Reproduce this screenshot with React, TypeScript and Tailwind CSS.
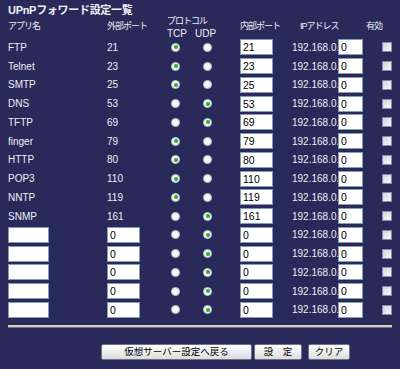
const forwards = [
  { app: "FTP", ext: "21", proto: "tcp", port: "21" },
  { app: "Telnet", ext: "23", proto: "tcp", port: "23" },
  { app: "SMTP", ext: "25", proto: "tcp", port: "25" },
  { app: "DNS", ext: "53", proto: "udp", port: "53" },
  { app: "TFTP", ext: "69", proto: "udp", port: "69" },
  { app: "finger", ext: "79", proto: "tcp", port: "79" },
  { app: "HTTP", ext: "80", proto: "tcp", port: "80" },
  { app: "POP3", ext: "110", proto: "tcp", port: "110" },
  { app: "NNTP", ext: "119", proto: "tcp", port: "119" },
  { app: "SNMP", ext: "161", proto: "udp", port: "161" },
  { app: "", ext: "0", proto: "udp", port: "0", custom: true },
  { app: "", ext: "0", proto: "udp", port: "0", custom: true },
  { app: "", ext: "0", proto: "udp", port: "0", custom: true },
  { app: "", ext: "0", proto: "udp", port: "0", custom: true },
  { app: "", ext: "0", proto: "udp", port: "0", custom: true },
];

const cols = "grid grid-cols-[99px_60px_28px_45px_52px_46px_44px_10px]";

const Radio = ({ on }: { on: boolean }) => (
  <span className="flex h-[9px] w-[9px] items-center justify-center rounded-full border border-[#b8bccc] bg-[#f6f6f6]">
    {on && <span className="h-[4px] w-[4px] rounded-full bg-[#22b022]" />}
  </span>
);

const Field = ({ value, w }: { value: string; w: string }) => (
  <div
    className={`${w} h-[16px] border border-[#7f9db9] bg-white pl-[2px] text-[10.5px] leading-[14px] text-black`}
  >
    {value}
  </div>
);

const Btn = ({ label, w }: { label: string; w: string }) => (
  <button
    className={`${w} h-[16px] rounded-[2px] border border-[#6a7290] bg-gradient-to-b from-white to-[#dcdcdc] text-[9.5px] leading-[14px] text-black`}
  >
    {label}
  </button>
);

export default function App() {
  return (
    <div
      className="h-[369px] w-[400px] bg-[#29295a] px-2 pt-[3px] text-[#f0f0f4]"
      style={{ fontFamily: '"Liberation Sans", "Noto Sans CJK JP", sans-serif' }}
    >
      <h4 className="text-[11px] font-bold leading-[14px] tracking-[-0.3px]">
        UPnPフォワード設定一覧
      </h4>

      {/* header */}
      <div className={`${cols} h-[21px] text-[9px] tracking-[-1px]`}>
        <div className="pt-[4px] leading-[10px]">アプリ名</div>
        <div className="pt-[4px] leading-[10px]">外部ポート</div>
        <div className="col-span-2 flex flex-col">
          <div className="leading-[9px]">プロトコル</div>
          <div className="mt-[2px] flex text-[10px] leading-[11px] tracking-normal">
            <span className="w-[28px]">TCP</span>
            <span>UDP</span>
          </div>
        </div>
        <div className="pt-[4px] leading-[10px]">内部ポート</div>
        <div className="col-span-2 pl-[8px] pt-[4px] leading-[10px]">IPアドレス</div>
        <div className="-ml-[16px] pt-[4px] leading-[10px]">有効</div>
      </div>

      {/* rows */}
      {forwards.map((row, key) => (
        <div className={`${cols} h-[18.75px] items-center text-[10px]`} key={key}>
          <div>{row.custom ? <Field value="" w="w-[41px]" /> : row.app}</div>
          <div>{row.custom ? <Field value={row.ext} w="w-[33px]" /> : row.ext}</div>
          <div className="pl-[4px]">
            <Radio on={row.proto === "tcp"} />
          </div>
          <div className="pl-[8px]">
            <Radio on={row.proto === "udp"} />
          </div>
          <div>
            <Field value={row.port} w="w-[33px]" />
          </div>
          <div className="whitespace-nowrap text-right">192.168.0.</div>
          <div>
            <Field value="0" w="w-[25px]" />
          </div>
          <div>
            <span className="block h-[10px] w-[10px] border border-[#7d8cb4] bg-gradient-to-br from-[#d4d4d4] to-[#f8f8f8]" />
          </div>
        </div>
      ))}

      <div className="mt-[6px] h-[3px] border-t-2 border-b border-t-[#d6cfc0] border-b-[#6e6e80]" />

      <div className="mt-[16px] flex gap-[2px] pl-[93px]">
        <Btn label="仮想サーバー設定へ戻る" w="w-[151px]" />
        <Btn label="設　定" w="w-[48px]" />
        <div className="w-[2px]" />
        <Btn label="クリア" w="w-[42px]" />
      </div>
    </div>
  );
}
